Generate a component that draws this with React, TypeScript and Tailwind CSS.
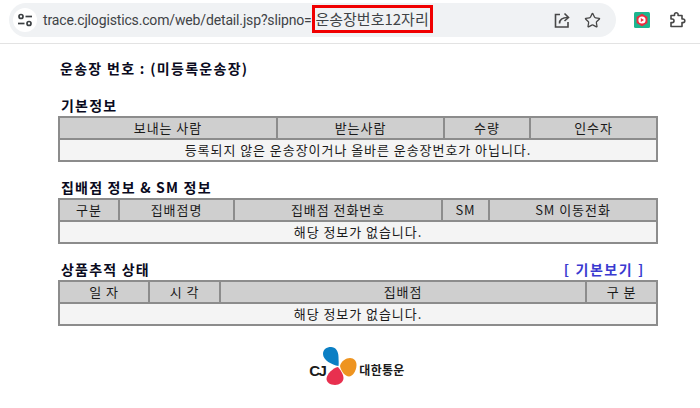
import React from 'react'
import { Star } from 'lucide-react'

const kr = "font-['Noto_Sans_CJK_KR','Noto_Sans',sans-serif]"

function TuneIcon() {
  return (
    <svg width="16" height="14" viewBox="0 0 16 14" fill="none" stroke="#3c4043" strokeWidth="1.7">
      <circle cx="4" cy="3.5" r="2" />
      <path d="M8.5 3.5H15" />
      <path d="M1 10.5H7.5" />
      <circle cx="12" cy="10.5" r="2" />
    </svg>
  )
}

function ShareIcon() {
  return (
    <svg width="18" height="18" viewBox="0 0 18 18" fill="none" stroke="#474747" strokeWidth="1.6">
      <path d="M7 3.5H2.5V16H15V11" />
      <path d="M6.5 12.5C6.5 8.5 9 6.5 15 6.5" />
      <path d="M11.5 2.5L15.5 6.5L11.5 10" />
    </svg>
  )
}

function ExtensionIcon() {
  return (
    <svg width="16" height="16" viewBox="0 0 16 16">
      <rect width="16" height="16" rx="1.5" fill="#1cb58f" />
      <path d="M8 1.8L13.4 4.9V11.1L8 14.2L2.6 11.1V4.9Z" fill="#ee2a3f" />
      <circle cx="8" cy="8" r="3.6" fill="#fff" />
      <path d="M6.8 6.1L10 8L6.8 9.9Z" fill="#ee2a3f" />
    </svg>
  )
}

function PuzzleIcon() {
  return (
    <svg width="18" height="18" viewBox="0 0 18 18" fill="none" stroke="#474747" strokeWidth="1.6" strokeLinejoin="round">
      <path d="M3 4.5H6.5V3.5A1.8 1.8 0 0 1 10.1 3.5V4.5H14V8H15A1.8 1.8 0 0 1 15 11.6H14V15.5H3V11.6H4.2A1.8 1.8 0 0 0 4.2 8H3Z" />
    </svg>
  )
}

function CjPetals() {
  return (
    <svg width="34" height="38" viewBox="0 0 34 38">
      <path d="M15.5 19C9 18 0 13 0 7C0 2.5 3.5 0 8 0C12.5 0 15.5 4 15.5 10C15.5 13 16 16 15.5 19Z" fill="#0b7fc4" />
      <path d="M15 20C18.5 24 20.5 28 20.5 31C20.5 35 16.5 38 12 38C7 38 3.5 35 3.5 32C3.5 27 10 21 15 20Z" fill="#e8304f" />
      <path d="M17 19C18 14 23 11 27 11C31 11 33.5 14 33.5 18C33.5 24 29.5 29.5 26 29.5C22 29.5 18 24 17 19Z" fill="#ee9420" />
    </svg>
  )
}

type Column = { label: string }

function InfoTable({ grid, columns, message }: { grid: string; columns: Column[]; message: string }) {
  return (
    <div className={`grid ${grid} grid-rows-[20px_20px] gap-[2px] bg-[#8c8c8c] p-[2px] w-[600px] h-[46px] text-[13px] tracking-[0.95px] text-[#1a1a1a]`}>
      {columns.map((c, i) => (
        <div key={i} className="bg-[#cfcfcf] flex items-center justify-center whitespace-pre">{c.label}</div>
      ))}
      <div className="col-span-full bg-[#f4f4f4] flex items-center justify-center">{message}</div>
    </div>
  )
}

export default function App() {
  return (
    <div className={`w-[700px] h-[408px] bg-white overflow-hidden ${kr}`}>
      <div className="h-[44px] border-b border-[#e3e3e3] flex items-start pt-[3px] pl-[9px]">
        <div className="w-[607px] h-[34px] bg-[#f0f2f4] rounded-full flex items-center pl-[4px]">
          <div className="w-[24px] h-[24px] bg-white rounded-full flex items-center justify-center shrink-0">
            <TuneIcon />
          </div>
          <span className="ml-[6px] font-['Roboto',sans-serif] text-[14px] tracking-[-0.15px] text-[#3f4346] whitespace-nowrap">trace.cjlogistics.com/web/detail.jsp?slipno=</span>
          <span className="w-[121px] h-[28px] mb-[2px] border-[3px] border-[#f00000] flex items-center justify-center text-[15px] text-[#3f4346] whitespace-nowrap">운송장번호12자리</span>
          <div className="ml-auto mr-[15px] flex items-center gap-[13px]">
            <ShareIcon />
            <Star size={17} strokeWidth={1.8} color="#474747" />
          </div>
        </div>
        <div className="ml-[18px] mt-[9px]"><ExtensionIcon /></div>
        <div className="ml-[18px] mt-[8px]"><PuzzleIcon /></div>
      </div>

      <div className="pl-[58px]">
        <div className="h-[18px] mt-[15px] pl-[2px] text-[14px] font-bold tracking-[1.3px] text-[#0a0a20] leading-[18px]">운송장 번호 : (미등록운송장)</div>

        <section className="mt-[19px] mb-[16px]">
          <div className="h-[20px] text-[14px] font-bold tracking-[1.2px] text-[#0a0a20] leading-[18px] pl-[3px]">기본정보</div>
          <InfoTable
            grid="grid-cols-[216px_165px_84px_1fr]"
            columns={[{ label: '보내는 사람' }, { label: '받는사람' }, { label: '수량' }, { label: '인수자' }]}
            message="등록되지 않은 운송장이거나 올바른 운송장번호가 아닙니다."
          />
        </section>

        <section className="mb-[16px]">
          <div className="h-[20px] text-[14px] font-bold tracking-[1.2px] text-[#0a0a20] leading-[18px] pl-[3px]">집배점 정보 &amp; SM 정보</div>
          <InfoTable
            grid="grid-cols-[58px_113px_206px_45px_1fr]"
            columns={[{ label: '구분' }, { label: '집배점명' }, { label: '집배점 전화번호' }, { label: 'SM' }, { label: 'SM 이동전화' }]}
            message="해당 정보가 없습니다."
          />
        </section>

        <section>
          <div className="h-[20px] w-[600px] flex justify-between text-[14px] font-bold tracking-[1.2px] leading-[18px] pl-[3px] pr-[13px]">
            <span className="text-[#0a0a20]">상품추적 상태</span>
            <span className="text-[#3a3ad0] tracking-[1.6px]">[ 기본보기 ]</span>
          </div>
          <InfoTable
            grid="grid-cols-[88px_69px_364px_1fr]"
            columns={[{ label: '일 자' }, { label: '시 각' }, { label: '집배점' }, { label: '구 분' }]}
            message="해당 정보가 없습니다."
          />
        </section>

        <div className="w-[600px] mt-[21px] pr-[2px] flex items-center justify-center h-[38px]">
          <span className="font-['Liberation_Sans',sans-serif] font-bold text-[15px] tracking-[-1.6px] text-[#1a1a1a] mr-[-2px] mt-[10px]">CJ</span>
          <CjPetals />
          <span className="text-[12px] font-bold tracking-[0.3px] text-[#1a1a1a] ml-[2px] mt-[8px]">대한통운</span>
        </div>
      </div>
    </div>
  )
}
